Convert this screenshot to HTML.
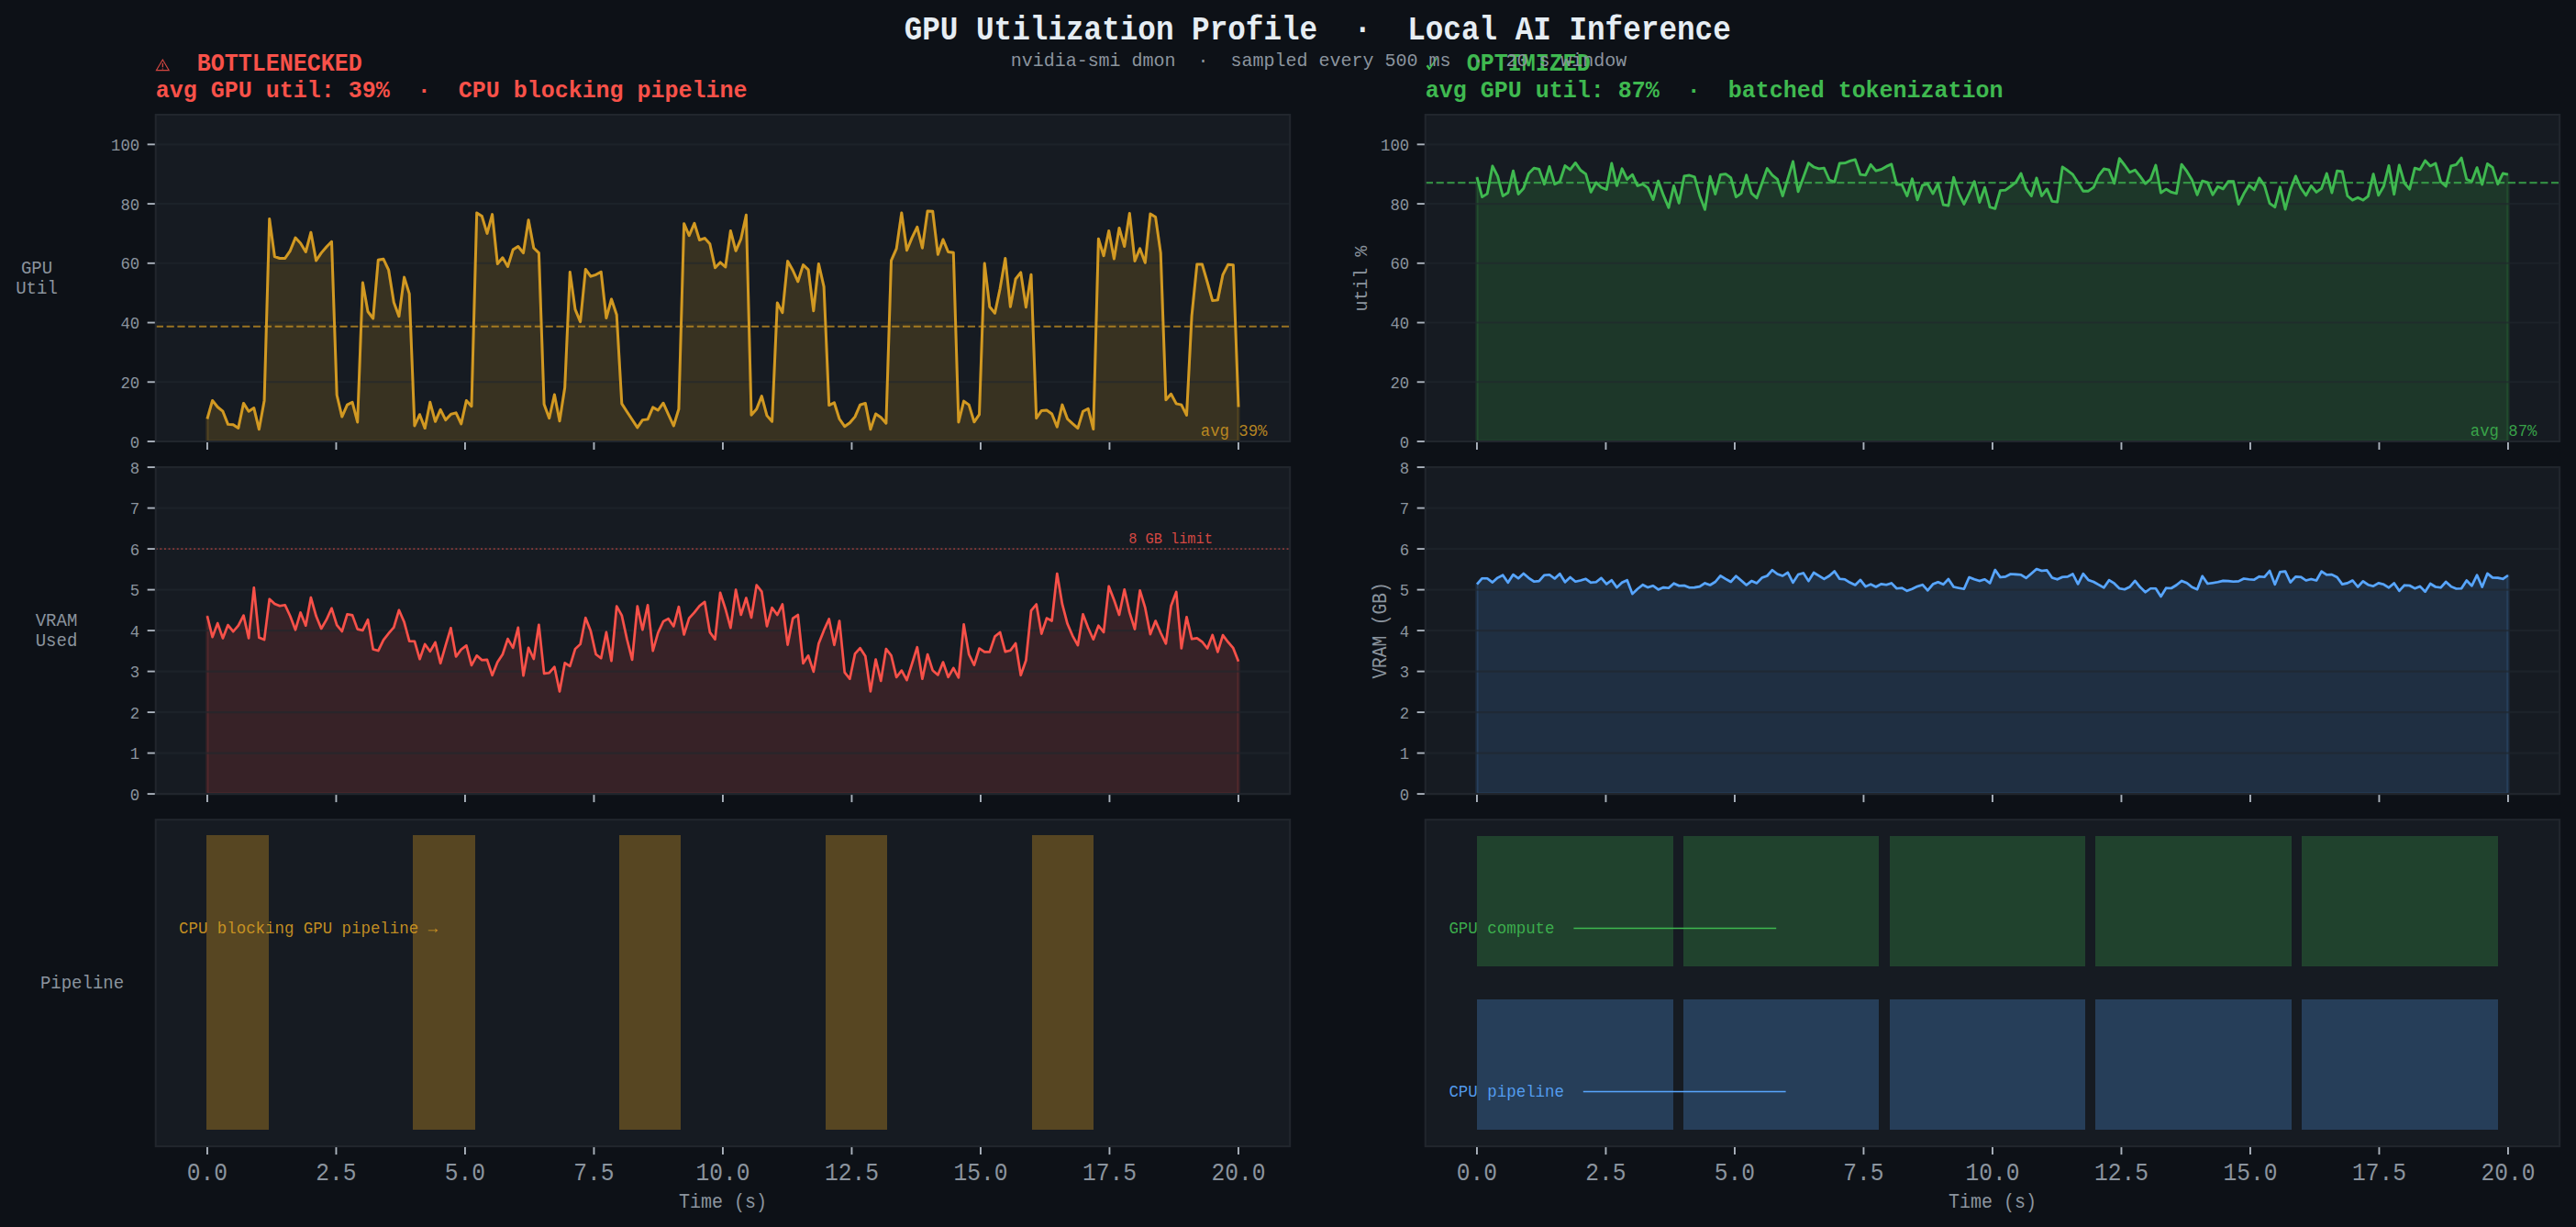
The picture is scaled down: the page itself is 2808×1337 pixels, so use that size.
<!DOCTYPE html>
<html><head><meta charset="utf-8"><title>GPU Utilization Profile</title>
<style>html,body{margin:0;padding:0;background:#0d1117;}body{width:2808px;height:1337px;overflow:hidden;font-family:"Liberation Mono",monospace;}svg{display:block}svg text{white-space:pre}</style>
</head><body>
<svg width="2808" height="1337" viewBox="0 0 2808 1337" font-family="Liberation Mono, monospace">
<rect width="2808" height="1337" fill="#0d1117"/>
<rect x="169.75" y="125.00" width="1236.40" height="356.00" fill="#161b22"/>
<clipPath id="c1"><rect x="169.75" y="0" width="1236.40" height="481.00"/></clipPath>
<polygon points="225.9,481.0 225.9,456.5 231.6,436.4 237.2,443.5 242.9,448.2 248.5,462.4 254.2,462.8 259.8,466.4 265.5,439.4 271.1,448.2 276.8,444.6 282.4,467.8 288.1,436.4 293.7,238.5 299.4,279.7 305.0,281.5 310.7,281.5 316.3,273.3 322.0,259.1 327.6,265.0 333.3,274.5 338.9,253.2 344.6,283.9 350.2,275.6 355.9,269.0 361.5,263.3 367.2,430.5 372.8,454.1 378.5,441.1 384.1,438.3 389.7,460.0 395.4,308.0 401.0,339.5 406.7,347.0 412.3,283.2 418.0,282.3 423.6,294.1 429.3,329.5 434.9,344.7 440.6,302.1 446.2,320.1 451.9,464.0 457.5,451.7 463.2,466.6 468.8,438.3 474.5,459.3 480.1,446.3 485.8,457.6 491.4,451.4 497.1,449.8 502.7,461.9 508.4,436.4 514.0,442.7 519.7,231.9 525.3,235.5 531.0,254.4 536.6,233.6 542.3,287.5 547.9,280.8 553.5,290.5 559.2,272.1 564.8,268.5 570.5,275.6 576.1,239.7 581.8,270.2 587.4,275.6 593.1,440.4 598.7,455.7 604.4,430.0 610.0,458.8 615.7,422.2 621.3,296.4 627.0,337.1 632.6,350.6 638.3,293.4 643.9,301.2 649.6,299.3 655.2,296.2 660.9,346.5 666.5,326.0 672.2,343.0 677.8,439.9 683.5,448.7 689.1,457.2 694.8,465.9 700.4,457.6 706.1,456.9 711.7,443.9 717.3,447.0 723.0,439.2 728.6,451.7 734.3,464.0 739.9,445.8 745.6,243.7 751.2,256.7 756.9,243.3 762.5,261.5 768.2,259.6 773.8,265.7 779.5,291.7 785.1,285.9 790.8,291.0 796.4,251.5 802.1,273.3 807.7,260.3 813.4,234.3 819.0,452.2 824.7,445.8 830.3,431.6 836.0,452.9 841.6,459.3 847.3,330.0 852.9,340.6 858.6,284.6 864.2,294.5 869.8,306.8 875.5,288.6 881.1,293.8 886.8,338.7 892.4,287.5 898.1,312.3 903.7,441.6 909.4,438.7 915.0,456.5 920.7,464.7 926.3,460.7 932.0,454.1 937.6,441.1 943.3,439.4 948.9,467.8 954.6,451.0 960.2,454.8 965.9,461.2 971.5,283.9 977.2,270.9 982.8,231.9 988.5,272.8 994.1,259.1 999.8,247.3 1005.4,270.2 1011.1,230.0 1016.7,230.3 1022.4,277.3 1028.0,261.0 1033.6,274.5 1039.3,275.2 1044.9,460.0 1050.6,437.1 1056.2,441.1 1061.9,459.8 1067.5,451.7 1073.2,287.0 1078.8,334.3 1084.5,341.3 1090.1,314.6 1095.8,281.5 1101.4,334.3 1107.1,304.0 1112.7,296.9 1118.4,334.7 1124.0,299.3 1129.7,455.7 1135.3,447.5 1141.0,447.0 1146.6,451.0 1152.3,465.2 1157.9,441.1 1163.6,456.5 1169.2,461.7 1174.9,466.6 1180.5,448.2 1186.2,445.3 1191.8,467.6 1197.4,260.3 1203.1,278.7 1208.7,251.5 1214.4,282.0 1220.0,248.5 1225.7,268.5 1231.3,232.4 1237.0,284.4 1242.6,270.9 1248.3,286.3 1253.9,233.1 1259.6,236.6 1265.2,275.6 1270.9,435.7 1276.5,429.3 1282.2,439.9 1287.8,441.1 1293.5,452.4 1299.1,344.2 1304.8,287.9 1310.4,287.9 1316.1,307.5 1321.7,327.6 1327.4,326.9 1333.0,299.3 1338.7,288.2 1344.3,288.6 1350.0,443.5 1350.0,481.0" fill="#d29922" fill-opacity="0.18" stroke="#d29922" stroke-opacity="0.18" stroke-width="3.2" stroke-linejoin="round" clip-path="url(#c1)"/>
<line x1="169.75" x2="1406.15" y1="481.00" y2="481.00" stroke="#21262d" stroke-opacity="0.62" stroke-width="2.1"/>
<line x1="169.75" x2="1406.15" y1="416.27" y2="416.27" stroke="#21262d" stroke-opacity="0.62" stroke-width="2.1"/>
<line x1="169.75" x2="1406.15" y1="351.55" y2="351.55" stroke="#21262d" stroke-opacity="0.62" stroke-width="2.1"/>
<line x1="169.75" x2="1406.15" y1="286.82" y2="286.82" stroke="#21262d" stroke-opacity="0.62" stroke-width="2.1"/>
<line x1="169.75" x2="1406.15" y1="222.09" y2="222.09" stroke="#21262d" stroke-opacity="0.62" stroke-width="2.1"/>
<line x1="169.75" x2="1406.15" y1="157.36" y2="157.36" stroke="#21262d" stroke-opacity="0.62" stroke-width="2.1"/>
<polyline points="225.9,456.5 231.6,436.4 237.2,443.5 242.9,448.2 248.5,462.4 254.2,462.8 259.8,466.4 265.5,439.4 271.1,448.2 276.8,444.6 282.4,467.8 288.1,436.4 293.7,238.5 299.4,279.7 305.0,281.5 310.7,281.5 316.3,273.3 322.0,259.1 327.6,265.0 333.3,274.5 338.9,253.2 344.6,283.9 350.2,275.6 355.9,269.0 361.5,263.3 367.2,430.5 372.8,454.1 378.5,441.1 384.1,438.3 389.7,460.0 395.4,308.0 401.0,339.5 406.7,347.0 412.3,283.2 418.0,282.3 423.6,294.1 429.3,329.5 434.9,344.7 440.6,302.1 446.2,320.1 451.9,464.0 457.5,451.7 463.2,466.6 468.8,438.3 474.5,459.3 480.1,446.3 485.8,457.6 491.4,451.4 497.1,449.8 502.7,461.9 508.4,436.4 514.0,442.7 519.7,231.9 525.3,235.5 531.0,254.4 536.6,233.6 542.3,287.5 547.9,280.8 553.5,290.5 559.2,272.1 564.8,268.5 570.5,275.6 576.1,239.7 581.8,270.2 587.4,275.6 593.1,440.4 598.7,455.7 604.4,430.0 610.0,458.8 615.7,422.2 621.3,296.4 627.0,337.1 632.6,350.6 638.3,293.4 643.9,301.2 649.6,299.3 655.2,296.2 660.9,346.5 666.5,326.0 672.2,343.0 677.8,439.9 683.5,448.7 689.1,457.2 694.8,465.9 700.4,457.6 706.1,456.9 711.7,443.9 717.3,447.0 723.0,439.2 728.6,451.7 734.3,464.0 739.9,445.8 745.6,243.7 751.2,256.7 756.9,243.3 762.5,261.5 768.2,259.6 773.8,265.7 779.5,291.7 785.1,285.9 790.8,291.0 796.4,251.5 802.1,273.3 807.7,260.3 813.4,234.3 819.0,452.2 824.7,445.8 830.3,431.6 836.0,452.9 841.6,459.3 847.3,330.0 852.9,340.6 858.6,284.6 864.2,294.5 869.8,306.8 875.5,288.6 881.1,293.8 886.8,338.7 892.4,287.5 898.1,312.3 903.7,441.6 909.4,438.7 915.0,456.5 920.7,464.7 926.3,460.7 932.0,454.1 937.6,441.1 943.3,439.4 948.9,467.8 954.6,451.0 960.2,454.8 965.9,461.2 971.5,283.9 977.2,270.9 982.8,231.9 988.5,272.8 994.1,259.1 999.8,247.3 1005.4,270.2 1011.1,230.0 1016.7,230.3 1022.4,277.3 1028.0,261.0 1033.6,274.5 1039.3,275.2 1044.9,460.0 1050.6,437.1 1056.2,441.1 1061.9,459.8 1067.5,451.7 1073.2,287.0 1078.8,334.3 1084.5,341.3 1090.1,314.6 1095.8,281.5 1101.4,334.3 1107.1,304.0 1112.7,296.9 1118.4,334.7 1124.0,299.3 1129.7,455.7 1135.3,447.5 1141.0,447.0 1146.6,451.0 1152.3,465.2 1157.9,441.1 1163.6,456.5 1169.2,461.7 1174.9,466.6 1180.5,448.2 1186.2,445.3 1191.8,467.6 1197.4,260.3 1203.1,278.7 1208.7,251.5 1214.4,282.0 1220.0,248.5 1225.7,268.5 1231.3,232.4 1237.0,284.4 1242.6,270.9 1248.3,286.3 1253.9,233.1 1259.6,236.6 1265.2,275.6 1270.9,435.7 1276.5,429.3 1282.2,439.9 1287.8,441.1 1293.5,452.4 1299.1,344.2 1304.8,287.9 1310.4,287.9 1316.1,307.5 1321.7,327.6 1327.4,326.9 1333.0,299.3 1338.7,288.2 1344.3,288.6 1350.0,443.5" fill="none" stroke="#d29922" stroke-width="2.95" stroke-linejoin="round" stroke-linecap="butt"/>
<line x1="169.8" x2="1406.2" y1="355.75" y2="355.75" stroke="#d29922" stroke-opacity="0.7" stroke-width="2.2" stroke-dasharray="8.2 3.6"/>
<text transform="translate(1381.42,475.00) scale(1,1.05)" font-size="17.3" fill="#d29922" text-anchor="end" font-weight="normal" xml:space="preserve" fill-opacity="0.85">avg 39%</text>
<rect x="169.75" y="125.00" width="1236.40" height="356.00" fill="none" stroke="#21262d" stroke-width="2.1"/>
<line x1="160.65" x2="168.80" y1="481.00" y2="481.00" stroke="#abb3bd" stroke-width="1.9"/>
<text transform="translate(152.15,487.60) scale(1,1.11)" font-size="17.3" fill="#8b949e" text-anchor="end" font-weight="normal" xml:space="preserve" >0</text>
<line x1="160.65" x2="168.80" y1="416.27" y2="416.27" stroke="#abb3bd" stroke-width="1.9"/>
<text transform="translate(152.15,422.87) scale(1,1.11)" font-size="17.3" fill="#8b949e" text-anchor="end" font-weight="normal" xml:space="preserve" >20</text>
<line x1="160.65" x2="168.80" y1="351.55" y2="351.55" stroke="#abb3bd" stroke-width="1.9"/>
<text transform="translate(152.15,358.15) scale(1,1.11)" font-size="17.3" fill="#8b949e" text-anchor="end" font-weight="normal" xml:space="preserve" >40</text>
<line x1="160.65" x2="168.80" y1="286.82" y2="286.82" stroke="#abb3bd" stroke-width="1.9"/>
<text transform="translate(152.15,293.42) scale(1,1.11)" font-size="17.3" fill="#8b949e" text-anchor="end" font-weight="normal" xml:space="preserve" >60</text>
<line x1="160.65" x2="168.80" y1="222.09" y2="222.09" stroke="#abb3bd" stroke-width="1.9"/>
<text transform="translate(152.15,228.69) scale(1,1.11)" font-size="17.3" fill="#8b949e" text-anchor="end" font-weight="normal" xml:space="preserve" >80</text>
<line x1="160.65" x2="168.80" y1="157.36" y2="157.36" stroke="#abb3bd" stroke-width="1.9"/>
<text transform="translate(152.15,163.96) scale(1,1.11)" font-size="17.3" fill="#8b949e" text-anchor="end" font-weight="normal" xml:space="preserve" >100</text>
<line x1="225.95" x2="225.95" y1="482.00" y2="490.00" stroke="#abb3bd" stroke-width="1.9"/>
<line x1="366.45" x2="366.45" y1="482.00" y2="490.00" stroke="#abb3bd" stroke-width="1.9"/>
<line x1="506.95" x2="506.95" y1="482.00" y2="490.00" stroke="#abb3bd" stroke-width="1.9"/>
<line x1="647.45" x2="647.45" y1="482.00" y2="490.00" stroke="#abb3bd" stroke-width="1.9"/>
<line x1="787.95" x2="787.95" y1="482.00" y2="490.00" stroke="#abb3bd" stroke-width="1.9"/>
<line x1="928.45" x2="928.45" y1="482.00" y2="490.00" stroke="#abb3bd" stroke-width="1.9"/>
<line x1="1068.95" x2="1068.95" y1="482.00" y2="490.00" stroke="#abb3bd" stroke-width="1.9"/>
<line x1="1209.45" x2="1209.45" y1="482.00" y2="490.00" stroke="#abb3bd" stroke-width="1.9"/>
<line x1="1349.95" x2="1349.95" y1="482.00" y2="490.00" stroke="#abb3bd" stroke-width="1.9"/>
<rect x="169.75" y="509.10" width="1236.40" height="356.00" fill="#161b22"/>
<clipPath id="c2"><rect x="169.75" y="0" width="1236.40" height="865.10"/></clipPath>
<polygon points="225.9,865.1 225.9,671.3 231.6,694.1 237.2,679.1 242.9,695.4 248.5,681.1 254.2,688.2 259.8,681.7 265.5,670.6 271.1,695.4 276.8,640.3 282.4,694.8 288.1,697.1 293.7,652.8 299.4,658.0 305.0,660.2 310.7,659.3 316.3,671.3 322.0,686.3 327.6,667.4 333.3,681.7 338.9,651.1 344.6,671.3 350.2,685.0 355.9,675.2 361.5,662.8 367.2,681.1 372.8,688.0 378.5,669.3 384.1,670.4 389.7,685.6 395.4,686.9 401.0,675.2 406.7,707.5 412.3,709.1 418.0,697.4 423.6,690.2 429.3,683.7 434.9,664.8 440.6,677.8 446.2,698.7 451.9,698.7 457.5,718.2 463.2,701.9 468.8,709.8 474.5,700.0 480.1,722.8 485.8,703.2 491.4,684.3 497.1,715.5 502.7,707.7 508.4,703.4 514.0,725.0 519.7,714.3 525.3,719.3 531.0,718.9 536.6,735.8 542.3,721.5 547.9,713.0 553.5,696.1 559.2,705.8 564.8,683.9 570.5,736.2 576.1,705.8 581.8,718.0 587.4,680.8 593.1,733.9 598.7,733.2 604.4,726.7 610.0,753.4 615.7,722.4 621.3,725.8 627.0,707.1 632.6,701.9 638.3,673.2 643.9,687.6 649.6,713.0 655.2,717.2 660.9,688.9 666.5,720.2 672.2,660.6 677.8,670.6 683.5,696.7 689.1,718.9 694.8,660.6 700.4,686.3 706.1,659.3 711.7,709.1 717.3,689.5 723.0,677.2 728.6,674.2 734.3,682.4 739.9,661.2 745.6,691.5 751.2,673.6 756.9,667.4 762.5,660.2 768.2,655.9 773.8,688.9 779.5,696.7 785.1,645.9 790.8,663.5 796.4,684.1 802.1,642.6 807.7,670.0 813.4,651.5 819.0,673.0 824.7,637.6 830.3,644.6 836.0,682.4 841.6,662.2 847.3,670.0 852.9,658.5 858.6,702.6 864.2,673.9 869.8,670.0 875.5,722.8 881.1,714.3 886.8,731.9 892.4,701.3 898.1,686.9 903.7,674.5 909.4,702.8 915.0,676.5 920.7,732.6 926.3,739.7 932.0,712.4 937.6,706.2 943.3,715.0 948.9,753.4 954.6,718.5 960.2,742.0 965.9,707.1 971.5,714.3 977.2,738.0 982.8,730.6 988.5,741.0 994.1,723.4 999.8,705.2 1005.4,739.7 1011.1,713.0 1016.7,730.6 1022.4,735.4 1028.0,721.5 1033.6,737.8 1039.3,728.0 1044.9,738.4 1050.6,680.4 1056.2,713.0 1061.9,724.7 1067.5,706.5 1073.2,710.4 1078.8,710.4 1084.5,693.5 1090.1,688.9 1095.8,710.1 1101.4,708.8 1107.1,701.0 1112.7,735.8 1118.4,719.5 1124.0,665.4 1129.7,658.5 1135.3,690.6 1141.0,673.6 1146.6,676.5 1152.3,625.0 1157.9,658.2 1163.6,679.8 1169.2,692.8 1174.9,703.2 1180.5,669.3 1186.2,684.3 1191.8,696.7 1197.4,681.7 1203.1,688.9 1208.7,638.9 1214.4,653.7 1220.0,670.0 1225.7,642.3 1231.3,667.4 1237.0,685.6 1242.6,643.3 1248.3,662.2 1253.9,691.1 1259.6,676.5 1265.2,689.5 1270.9,701.3 1276.5,660.2 1282.2,644.9 1287.8,706.5 1293.5,672.3 1299.1,696.3 1304.8,695.4 1310.4,699.3 1316.1,706.5 1321.7,691.9 1327.4,710.4 1333.0,692.1 1338.7,699.7 1344.3,706.2 1350.0,720.8 1350.0,865.1" fill="#f85149" fill-opacity="0.15" stroke="#f85149" stroke-opacity="0.15" stroke-width="3.2" stroke-linejoin="round" clip-path="url(#c2)"/>
<line x1="169.75" x2="1406.15" y1="865.10" y2="865.10" stroke="#21262d" stroke-opacity="0.62" stroke-width="2.1"/>
<line x1="169.75" x2="1406.15" y1="820.60" y2="820.60" stroke="#21262d" stroke-opacity="0.62" stroke-width="2.1"/>
<line x1="169.75" x2="1406.15" y1="776.10" y2="776.10" stroke="#21262d" stroke-opacity="0.62" stroke-width="2.1"/>
<line x1="169.75" x2="1406.15" y1="731.60" y2="731.60" stroke="#21262d" stroke-opacity="0.62" stroke-width="2.1"/>
<line x1="169.75" x2="1406.15" y1="687.10" y2="687.10" stroke="#21262d" stroke-opacity="0.62" stroke-width="2.1"/>
<line x1="169.75" x2="1406.15" y1="642.60" y2="642.60" stroke="#21262d" stroke-opacity="0.62" stroke-width="2.1"/>
<line x1="169.75" x2="1406.15" y1="598.10" y2="598.10" stroke="#21262d" stroke-opacity="0.62" stroke-width="2.1"/>
<line x1="169.75" x2="1406.15" y1="553.60" y2="553.60" stroke="#21262d" stroke-opacity="0.62" stroke-width="2.1"/>
<line x1="169.75" x2="1406.15" y1="509.10" y2="509.10" stroke="#21262d" stroke-opacity="0.62" stroke-width="2.1"/>
<polyline points="225.9,671.3 231.6,694.1 237.2,679.1 242.9,695.4 248.5,681.1 254.2,688.2 259.8,681.7 265.5,670.6 271.1,695.4 276.8,640.3 282.4,694.8 288.1,697.1 293.7,652.8 299.4,658.0 305.0,660.2 310.7,659.3 316.3,671.3 322.0,686.3 327.6,667.4 333.3,681.7 338.9,651.1 344.6,671.3 350.2,685.0 355.9,675.2 361.5,662.8 367.2,681.1 372.8,688.0 378.5,669.3 384.1,670.4 389.7,685.6 395.4,686.9 401.0,675.2 406.7,707.5 412.3,709.1 418.0,697.4 423.6,690.2 429.3,683.7 434.9,664.8 440.6,677.8 446.2,698.7 451.9,698.7 457.5,718.2 463.2,701.9 468.8,709.8 474.5,700.0 480.1,722.8 485.8,703.2 491.4,684.3 497.1,715.5 502.7,707.7 508.4,703.4 514.0,725.0 519.7,714.3 525.3,719.3 531.0,718.9 536.6,735.8 542.3,721.5 547.9,713.0 553.5,696.1 559.2,705.8 564.8,683.9 570.5,736.2 576.1,705.8 581.8,718.0 587.4,680.8 593.1,733.9 598.7,733.2 604.4,726.7 610.0,753.4 615.7,722.4 621.3,725.8 627.0,707.1 632.6,701.9 638.3,673.2 643.9,687.6 649.6,713.0 655.2,717.2 660.9,688.9 666.5,720.2 672.2,660.6 677.8,670.6 683.5,696.7 689.1,718.9 694.8,660.6 700.4,686.3 706.1,659.3 711.7,709.1 717.3,689.5 723.0,677.2 728.6,674.2 734.3,682.4 739.9,661.2 745.6,691.5 751.2,673.6 756.9,667.4 762.5,660.2 768.2,655.9 773.8,688.9 779.5,696.7 785.1,645.9 790.8,663.5 796.4,684.1 802.1,642.6 807.7,670.0 813.4,651.5 819.0,673.0 824.7,637.6 830.3,644.6 836.0,682.4 841.6,662.2 847.3,670.0 852.9,658.5 858.6,702.6 864.2,673.9 869.8,670.0 875.5,722.8 881.1,714.3 886.8,731.9 892.4,701.3 898.1,686.9 903.7,674.5 909.4,702.8 915.0,676.5 920.7,732.6 926.3,739.7 932.0,712.4 937.6,706.2 943.3,715.0 948.9,753.4 954.6,718.5 960.2,742.0 965.9,707.1 971.5,714.3 977.2,738.0 982.8,730.6 988.5,741.0 994.1,723.4 999.8,705.2 1005.4,739.7 1011.1,713.0 1016.7,730.6 1022.4,735.4 1028.0,721.5 1033.6,737.8 1039.3,728.0 1044.9,738.4 1050.6,680.4 1056.2,713.0 1061.9,724.7 1067.5,706.5 1073.2,710.4 1078.8,710.4 1084.5,693.5 1090.1,688.9 1095.8,710.1 1101.4,708.8 1107.1,701.0 1112.7,735.8 1118.4,719.5 1124.0,665.4 1129.7,658.5 1135.3,690.6 1141.0,673.6 1146.6,676.5 1152.3,625.0 1157.9,658.2 1163.6,679.8 1169.2,692.8 1174.9,703.2 1180.5,669.3 1186.2,684.3 1191.8,696.7 1197.4,681.7 1203.1,688.9 1208.7,638.9 1214.4,653.7 1220.0,670.0 1225.7,642.3 1231.3,667.4 1237.0,685.6 1242.6,643.3 1248.3,662.2 1253.9,691.1 1259.6,676.5 1265.2,689.5 1270.9,701.3 1276.5,660.2 1282.2,644.9 1287.8,706.5 1293.5,672.3 1299.1,696.3 1304.8,695.4 1310.4,699.3 1316.1,706.5 1321.7,691.9 1327.4,710.4 1333.0,692.1 1338.7,699.7 1344.3,706.2 1350.0,720.8" fill="none" stroke="#f85149" stroke-width="2.65" stroke-linejoin="round" stroke-linecap="butt"/>
<line x1="169.8" x2="1406.2" y1="598.10" y2="598.10" stroke="#f85149" stroke-opacity="0.5" stroke-width="1.9" stroke-dasharray="1.9 2.7"/>
<text transform="translate(1321.85,591.50) scale(1,1.06)" font-size="15.3" fill="#f85149" text-anchor="end" font-weight="normal" xml:space="preserve" fill-opacity="0.85">8 GB limit</text>
<rect x="169.75" y="509.10" width="1236.40" height="356.00" fill="none" stroke="#21262d" stroke-width="2.1"/>
<line x1="160.65" x2="168.80" y1="865.10" y2="865.10" stroke="#abb3bd" stroke-width="1.9"/>
<text transform="translate(152.15,871.70) scale(1,1.11)" font-size="17.3" fill="#8b949e" text-anchor="end" font-weight="normal" xml:space="preserve" >0</text>
<line x1="160.65" x2="168.80" y1="820.60" y2="820.60" stroke="#abb3bd" stroke-width="1.9"/>
<text transform="translate(152.15,827.20) scale(1,1.11)" font-size="17.3" fill="#8b949e" text-anchor="end" font-weight="normal" xml:space="preserve" >1</text>
<line x1="160.65" x2="168.80" y1="776.10" y2="776.10" stroke="#abb3bd" stroke-width="1.9"/>
<text transform="translate(152.15,782.70) scale(1,1.11)" font-size="17.3" fill="#8b949e" text-anchor="end" font-weight="normal" xml:space="preserve" >2</text>
<line x1="160.65" x2="168.80" y1="731.60" y2="731.60" stroke="#abb3bd" stroke-width="1.9"/>
<text transform="translate(152.15,738.20) scale(1,1.11)" font-size="17.3" fill="#8b949e" text-anchor="end" font-weight="normal" xml:space="preserve" >3</text>
<line x1="160.65" x2="168.80" y1="687.10" y2="687.10" stroke="#abb3bd" stroke-width="1.9"/>
<text transform="translate(152.15,693.70) scale(1,1.11)" font-size="17.3" fill="#8b949e" text-anchor="end" font-weight="normal" xml:space="preserve" >4</text>
<line x1="160.65" x2="168.80" y1="642.60" y2="642.60" stroke="#abb3bd" stroke-width="1.9"/>
<text transform="translate(152.15,649.20) scale(1,1.11)" font-size="17.3" fill="#8b949e" text-anchor="end" font-weight="normal" xml:space="preserve" >5</text>
<line x1="160.65" x2="168.80" y1="598.10" y2="598.10" stroke="#abb3bd" stroke-width="1.9"/>
<text transform="translate(152.15,604.70) scale(1,1.11)" font-size="17.3" fill="#8b949e" text-anchor="end" font-weight="normal" xml:space="preserve" >6</text>
<line x1="160.65" x2="168.80" y1="553.60" y2="553.60" stroke="#abb3bd" stroke-width="1.9"/>
<text transform="translate(152.15,560.20) scale(1,1.11)" font-size="17.3" fill="#8b949e" text-anchor="end" font-weight="normal" xml:space="preserve" >7</text>
<line x1="160.65" x2="168.80" y1="509.10" y2="509.10" stroke="#abb3bd" stroke-width="1.9"/>
<text transform="translate(152.15,515.70) scale(1,1.11)" font-size="17.3" fill="#8b949e" text-anchor="end" font-weight="normal" xml:space="preserve" >8</text>
<line x1="225.95" x2="225.95" y1="866.10" y2="874.10" stroke="#abb3bd" stroke-width="1.9"/>
<line x1="366.45" x2="366.45" y1="866.10" y2="874.10" stroke="#abb3bd" stroke-width="1.9"/>
<line x1="506.95" x2="506.95" y1="866.10" y2="874.10" stroke="#abb3bd" stroke-width="1.9"/>
<line x1="647.45" x2="647.45" y1="866.10" y2="874.10" stroke="#abb3bd" stroke-width="1.9"/>
<line x1="787.95" x2="787.95" y1="866.10" y2="874.10" stroke="#abb3bd" stroke-width="1.9"/>
<line x1="928.45" x2="928.45" y1="866.10" y2="874.10" stroke="#abb3bd" stroke-width="1.9"/>
<line x1="1068.95" x2="1068.95" y1="866.10" y2="874.10" stroke="#abb3bd" stroke-width="1.9"/>
<line x1="1209.45" x2="1209.45" y1="866.10" y2="874.10" stroke="#abb3bd" stroke-width="1.9"/>
<line x1="1349.95" x2="1349.95" y1="866.10" y2="874.10" stroke="#abb3bd" stroke-width="1.9"/>
<rect x="169.75" y="893.20" width="1236.40" height="355.90" fill="#161b22"/>
<rect x="225" y="910" width="68" height="321" fill="#d29922" fill-opacity="0.35"/>
<rect x="450" y="910" width="68" height="321" fill="#d29922" fill-opacity="0.35"/>
<rect x="675" y="910" width="67" height="321" fill="#d29922" fill-opacity="0.35"/>
<rect x="900" y="910" width="67" height="321" fill="#d29922" fill-opacity="0.35"/>
<rect x="1125" y="910" width="67" height="321" fill="#d29922" fill-opacity="0.35"/>
<text transform="translate(195.08,1016.90) scale(1,1.04)" font-size="17.4" fill="#d29922" text-anchor="start" font-weight="normal" xml:space="preserve" fill-opacity="0.92">CPU blocking GPU pipeline →</text>
<rect x="169.75" y="893.20" width="1236.40" height="355.90" fill="none" stroke="#21262d" stroke-width="2.1"/>
<line x1="225.95" x2="225.95" y1="1250.10" y2="1258.10" stroke="#abb3bd" stroke-width="1.9"/>
<text transform="translate(225.95,1286.00) scale(1,1.1)" font-size="24.6" fill="#8b949e" text-anchor="middle" font-weight="normal" xml:space="preserve" >0.0</text>
<line x1="366.45" x2="366.45" y1="1250.10" y2="1258.10" stroke="#abb3bd" stroke-width="1.9"/>
<text transform="translate(366.45,1286.00) scale(1,1.1)" font-size="24.6" fill="#8b949e" text-anchor="middle" font-weight="normal" xml:space="preserve" >2.5</text>
<line x1="506.95" x2="506.95" y1="1250.10" y2="1258.10" stroke="#abb3bd" stroke-width="1.9"/>
<text transform="translate(506.95,1286.00) scale(1,1.1)" font-size="24.6" fill="#8b949e" text-anchor="middle" font-weight="normal" xml:space="preserve" >5.0</text>
<line x1="647.45" x2="647.45" y1="1250.10" y2="1258.10" stroke="#abb3bd" stroke-width="1.9"/>
<text transform="translate(647.45,1286.00) scale(1,1.1)" font-size="24.6" fill="#8b949e" text-anchor="middle" font-weight="normal" xml:space="preserve" >7.5</text>
<line x1="787.95" x2="787.95" y1="1250.10" y2="1258.10" stroke="#abb3bd" stroke-width="1.9"/>
<text transform="translate(787.95,1286.00) scale(1,1.1)" font-size="24.6" fill="#8b949e" text-anchor="middle" font-weight="normal" xml:space="preserve" >10.0</text>
<line x1="928.45" x2="928.45" y1="1250.10" y2="1258.10" stroke="#abb3bd" stroke-width="1.9"/>
<text transform="translate(928.45,1286.00) scale(1,1.1)" font-size="24.6" fill="#8b949e" text-anchor="middle" font-weight="normal" xml:space="preserve" >12.5</text>
<line x1="1068.95" x2="1068.95" y1="1250.10" y2="1258.10" stroke="#abb3bd" stroke-width="1.9"/>
<text transform="translate(1068.95,1286.00) scale(1,1.1)" font-size="24.6" fill="#8b949e" text-anchor="middle" font-weight="normal" xml:space="preserve" >15.0</text>
<line x1="1209.45" x2="1209.45" y1="1250.10" y2="1258.10" stroke="#abb3bd" stroke-width="1.9"/>
<text transform="translate(1209.45,1286.00) scale(1,1.1)" font-size="24.6" fill="#8b949e" text-anchor="middle" font-weight="normal" xml:space="preserve" >17.5</text>
<line x1="1349.95" x2="1349.95" y1="1250.10" y2="1258.10" stroke="#abb3bd" stroke-width="1.9"/>
<text transform="translate(1349.95,1286.00) scale(1,1.1)" font-size="24.6" fill="#8b949e" text-anchor="middle" font-weight="normal" xml:space="preserve" >20.0</text>
<text transform="translate(787.95,1316.30) scale(1,1.06)" font-size="20.0" fill="#8b949e" text-anchor="middle" font-weight="normal" xml:space="preserve" >Time (s)</text>
<rect x="1553.75" y="125.00" width="1236.40" height="356.00" fill="#161b22"/>
<clipPath id="c3"><rect x="1553.75" y="0" width="1236.40" height="481.00"/></clipPath>
<polygon points="1610.0,481.0 1610.0,193.1 1615.6,214.6 1621.2,211.1 1626.9,180.9 1632.5,191.9 1638.2,213.5 1643.8,210.0 1649.5,186.1 1655.1,211.5 1660.8,205.3 1666.4,189.0 1672.1,183.2 1677.7,184.4 1683.4,200.7 1689.0,181.4 1694.7,200.7 1700.3,197.7 1706.0,180.5 1711.6,184.9 1717.3,177.4 1722.9,185.5 1728.6,189.6 1734.2,209.4 1739.9,198.9 1745.5,204.2 1751.2,206.5 1756.8,178.0 1762.5,202.4 1768.1,183.8 1773.7,195.4 1779.4,190.2 1785.0,202.4 1790.7,200.7 1796.3,204.7 1802.0,217.5 1807.6,197.2 1813.3,212.9 1818.9,226.3 1824.6,202.4 1830.2,221.3 1835.9,191.9 1841.5,191.0 1847.2,192.9 1852.8,213.5 1858.5,228.3 1864.1,192.2 1869.8,211.5 1875.4,190.4 1881.1,189.6 1886.7,193.7 1892.4,214.6 1898.0,210.6 1903.7,190.8 1909.3,210.6 1915.0,215.8 1920.6,199.7 1926.3,183.5 1931.9,190.8 1937.5,195.4 1943.2,213.5 1948.8,194.8 1954.5,175.9 1960.1,208.8 1965.8,193.3 1971.4,177.7 1977.1,182.0 1982.7,183.8 1988.4,183.2 1994.0,196.0 1999.7,198.3 2005.3,178.0 2011.0,177.7 2016.6,175.4 2022.3,173.9 2027.9,190.2 2033.6,190.8 2039.2,179.3 2044.9,186.1 2050.5,184.7 2056.2,181.4 2061.8,178.9 2067.5,201.2 2073.1,201.0 2078.8,213.5 2084.4,194.8 2090.1,217.8 2095.7,201.8 2101.3,200.3 2107.0,211.1 2112.6,200.1 2118.3,223.1 2123.9,224.0 2129.6,193.3 2135.2,210.6 2140.9,222.4 2146.5,210.6 2152.2,197.7 2157.8,220.5 2163.5,204.2 2169.1,225.7 2174.8,227.3 2180.4,207.6 2186.1,207.1 2191.7,203.0 2197.4,198.7 2203.0,189.0 2208.7,205.9 2214.3,213.5 2220.0,194.0 2225.6,213.5 2231.3,205.9 2236.9,219.3 2242.6,220.1 2248.2,182.0 2253.8,185.8 2259.5,190.2 2265.1,198.9 2270.8,208.2 2276.4,208.2 2282.1,204.2 2287.7,191.3 2293.4,184.0 2299.0,185.2 2304.7,199.8 2310.3,172.7 2316.0,180.0 2321.6,187.8 2327.3,185.2 2332.9,192.2 2338.6,200.1 2344.2,195.4 2349.9,180.0 2355.5,210.0 2361.2,206.1 2366.8,209.4 2372.5,210.8 2378.1,179.1 2383.8,186.7 2389.4,196.0 2395.1,212.3 2400.7,197.2 2406.4,198.9 2412.0,212.3 2417.6,203.3 2423.3,205.9 2428.9,197.7 2434.6,197.7 2440.2,222.6 2445.9,211.1 2451.5,201.8 2457.2,206.8 2462.8,194.0 2468.5,202.4 2474.1,221.6 2479.8,225.7 2485.4,203.8 2491.1,228.0 2496.7,206.5 2502.4,191.9 2508.0,204.7 2513.7,212.9 2519.3,202.4 2525.0,209.4 2530.6,205.3 2536.3,189.0 2541.9,210.0 2547.6,186.1 2553.2,187.0 2558.9,213.5 2564.5,218.1 2570.2,215.2 2575.8,218.1 2581.4,213.8 2587.1,189.6 2592.7,212.9 2598.4,203.0 2604.0,180.5 2609.7,211.7 2615.3,180.0 2621.0,199.5 2626.6,206.2 2632.3,183.2 2637.9,184.9 2643.6,175.0 2649.2,180.9 2654.9,178.0 2660.5,198.0 2666.2,203.0 2671.8,180.9 2677.5,179.3 2683.1,172.1 2688.8,195.4 2694.4,197.7 2700.1,182.6 2705.7,201.0 2711.4,178.5 2717.0,182.4 2722.7,200.7 2728.3,189.0 2733.9,190.2 2733.9,481.0" fill="#3fb950" fill-opacity="0.18" stroke="#3fb950" stroke-opacity="0.18" stroke-width="3.2" stroke-linejoin="round" clip-path="url(#c3)"/>
<line x1="1553.75" x2="2790.15" y1="481.00" y2="481.00" stroke="#21262d" stroke-opacity="0.62" stroke-width="2.1"/>
<line x1="1553.75" x2="2790.15" y1="416.27" y2="416.27" stroke="#21262d" stroke-opacity="0.62" stroke-width="2.1"/>
<line x1="1553.75" x2="2790.15" y1="351.55" y2="351.55" stroke="#21262d" stroke-opacity="0.62" stroke-width="2.1"/>
<line x1="1553.75" x2="2790.15" y1="286.82" y2="286.82" stroke="#21262d" stroke-opacity="0.62" stroke-width="2.1"/>
<line x1="1553.75" x2="2790.15" y1="222.09" y2="222.09" stroke="#21262d" stroke-opacity="0.62" stroke-width="2.1"/>
<line x1="1553.75" x2="2790.15" y1="157.36" y2="157.36" stroke="#21262d" stroke-opacity="0.62" stroke-width="2.1"/>
<polyline points="1610.0,193.1 1615.6,214.6 1621.2,211.1 1626.9,180.9 1632.5,191.9 1638.2,213.5 1643.8,210.0 1649.5,186.1 1655.1,211.5 1660.8,205.3 1666.4,189.0 1672.1,183.2 1677.7,184.4 1683.4,200.7 1689.0,181.4 1694.7,200.7 1700.3,197.7 1706.0,180.5 1711.6,184.9 1717.3,177.4 1722.9,185.5 1728.6,189.6 1734.2,209.4 1739.9,198.9 1745.5,204.2 1751.2,206.5 1756.8,178.0 1762.5,202.4 1768.1,183.8 1773.7,195.4 1779.4,190.2 1785.0,202.4 1790.7,200.7 1796.3,204.7 1802.0,217.5 1807.6,197.2 1813.3,212.9 1818.9,226.3 1824.6,202.4 1830.2,221.3 1835.9,191.9 1841.5,191.0 1847.2,192.9 1852.8,213.5 1858.5,228.3 1864.1,192.2 1869.8,211.5 1875.4,190.4 1881.1,189.6 1886.7,193.7 1892.4,214.6 1898.0,210.6 1903.7,190.8 1909.3,210.6 1915.0,215.8 1920.6,199.7 1926.3,183.5 1931.9,190.8 1937.5,195.4 1943.2,213.5 1948.8,194.8 1954.5,175.9 1960.1,208.8 1965.8,193.3 1971.4,177.7 1977.1,182.0 1982.7,183.8 1988.4,183.2 1994.0,196.0 1999.7,198.3 2005.3,178.0 2011.0,177.7 2016.6,175.4 2022.3,173.9 2027.9,190.2 2033.6,190.8 2039.2,179.3 2044.9,186.1 2050.5,184.7 2056.2,181.4 2061.8,178.9 2067.5,201.2 2073.1,201.0 2078.8,213.5 2084.4,194.8 2090.1,217.8 2095.7,201.8 2101.3,200.3 2107.0,211.1 2112.6,200.1 2118.3,223.1 2123.9,224.0 2129.6,193.3 2135.2,210.6 2140.9,222.4 2146.5,210.6 2152.2,197.7 2157.8,220.5 2163.5,204.2 2169.1,225.7 2174.8,227.3 2180.4,207.6 2186.1,207.1 2191.7,203.0 2197.4,198.7 2203.0,189.0 2208.7,205.9 2214.3,213.5 2220.0,194.0 2225.6,213.5 2231.3,205.9 2236.9,219.3 2242.6,220.1 2248.2,182.0 2253.8,185.8 2259.5,190.2 2265.1,198.9 2270.8,208.2 2276.4,208.2 2282.1,204.2 2287.7,191.3 2293.4,184.0 2299.0,185.2 2304.7,199.8 2310.3,172.7 2316.0,180.0 2321.6,187.8 2327.3,185.2 2332.9,192.2 2338.6,200.1 2344.2,195.4 2349.9,180.0 2355.5,210.0 2361.2,206.1 2366.8,209.4 2372.5,210.8 2378.1,179.1 2383.8,186.7 2389.4,196.0 2395.1,212.3 2400.7,197.2 2406.4,198.9 2412.0,212.3 2417.6,203.3 2423.3,205.9 2428.9,197.7 2434.6,197.7 2440.2,222.6 2445.9,211.1 2451.5,201.8 2457.2,206.8 2462.8,194.0 2468.5,202.4 2474.1,221.6 2479.8,225.7 2485.4,203.8 2491.1,228.0 2496.7,206.5 2502.4,191.9 2508.0,204.7 2513.7,212.9 2519.3,202.4 2525.0,209.4 2530.6,205.3 2536.3,189.0 2541.9,210.0 2547.6,186.1 2553.2,187.0 2558.9,213.5 2564.5,218.1 2570.2,215.2 2575.8,218.1 2581.4,213.8 2587.1,189.6 2592.7,212.9 2598.4,203.0 2604.0,180.5 2609.7,211.7 2615.3,180.0 2621.0,199.5 2626.6,206.2 2632.3,183.2 2637.9,184.9 2643.6,175.0 2649.2,180.9 2654.9,178.0 2660.5,198.0 2666.2,203.0 2671.8,180.9 2677.5,179.3 2683.1,172.1 2688.8,195.4 2694.4,197.7 2700.1,182.6 2705.7,201.0 2711.4,178.5 2717.0,182.4 2722.7,200.7 2728.3,189.0 2733.9,190.2" fill="none" stroke="#3fb950" stroke-width="2.85" stroke-linejoin="round" stroke-linecap="butt"/>
<line x1="1553.8" x2="2790.2" y1="199.11" y2="199.11" stroke="#3fb950" stroke-opacity="0.7" stroke-width="2.2" stroke-dasharray="8.2 3.6"/>
<text transform="translate(2765.42,475.00) scale(1,1.05)" font-size="17.3" fill="#3fb950" text-anchor="end" font-weight="normal" xml:space="preserve" fill-opacity="0.85">avg 87%</text>
<rect x="1553.75" y="125.00" width="1236.40" height="356.00" fill="none" stroke="#21262d" stroke-width="2.1"/>
<line x1="1544.65" x2="1552.80" y1="481.00" y2="481.00" stroke="#abb3bd" stroke-width="1.9"/>
<text transform="translate(1536.15,487.60) scale(1,1.11)" font-size="17.3" fill="#8b949e" text-anchor="end" font-weight="normal" xml:space="preserve" >0</text>
<line x1="1544.65" x2="1552.80" y1="416.27" y2="416.27" stroke="#abb3bd" stroke-width="1.9"/>
<text transform="translate(1536.15,422.87) scale(1,1.11)" font-size="17.3" fill="#8b949e" text-anchor="end" font-weight="normal" xml:space="preserve" >20</text>
<line x1="1544.65" x2="1552.80" y1="351.55" y2="351.55" stroke="#abb3bd" stroke-width="1.9"/>
<text transform="translate(1536.15,358.15) scale(1,1.11)" font-size="17.3" fill="#8b949e" text-anchor="end" font-weight="normal" xml:space="preserve" >40</text>
<line x1="1544.65" x2="1552.80" y1="286.82" y2="286.82" stroke="#abb3bd" stroke-width="1.9"/>
<text transform="translate(1536.15,293.42) scale(1,1.11)" font-size="17.3" fill="#8b949e" text-anchor="end" font-weight="normal" xml:space="preserve" >60</text>
<line x1="1544.65" x2="1552.80" y1="222.09" y2="222.09" stroke="#abb3bd" stroke-width="1.9"/>
<text transform="translate(1536.15,228.69) scale(1,1.11)" font-size="17.3" fill="#8b949e" text-anchor="end" font-weight="normal" xml:space="preserve" >80</text>
<line x1="1544.65" x2="1552.80" y1="157.36" y2="157.36" stroke="#abb3bd" stroke-width="1.9"/>
<text transform="translate(1536.15,163.96) scale(1,1.11)" font-size="17.3" fill="#8b949e" text-anchor="end" font-weight="normal" xml:space="preserve" >100</text>
<line x1="1609.95" x2="1609.95" y1="482.00" y2="490.00" stroke="#abb3bd" stroke-width="1.9"/>
<line x1="1750.45" x2="1750.45" y1="482.00" y2="490.00" stroke="#abb3bd" stroke-width="1.9"/>
<line x1="1890.95" x2="1890.95" y1="482.00" y2="490.00" stroke="#abb3bd" stroke-width="1.9"/>
<line x1="2031.45" x2="2031.45" y1="482.00" y2="490.00" stroke="#abb3bd" stroke-width="1.9"/>
<line x1="2171.95" x2="2171.95" y1="482.00" y2="490.00" stroke="#abb3bd" stroke-width="1.9"/>
<line x1="2312.45" x2="2312.45" y1="482.00" y2="490.00" stroke="#abb3bd" stroke-width="1.9"/>
<line x1="2452.95" x2="2452.95" y1="482.00" y2="490.00" stroke="#abb3bd" stroke-width="1.9"/>
<line x1="2593.45" x2="2593.45" y1="482.00" y2="490.00" stroke="#abb3bd" stroke-width="1.9"/>
<line x1="2733.95" x2="2733.95" y1="482.00" y2="490.00" stroke="#abb3bd" stroke-width="1.9"/>
<rect x="1553.75" y="509.10" width="1236.40" height="356.00" fill="#161b22"/>
<clipPath id="c4"><rect x="1553.75" y="0" width="1236.40" height="865.10"/></clipPath>
<polygon points="1610.0,865.1 1610.0,636.6 1615.6,630.2 1621.2,630.2 1626.9,634.6 1632.5,629.6 1638.2,626.7 1643.8,634.8 1649.5,626.1 1655.1,630.2 1660.8,624.9 1666.4,629.8 1672.1,633.7 1677.7,633.1 1683.4,626.7 1689.0,626.3 1694.7,630.5 1700.3,625.2 1706.0,634.3 1711.6,629.0 1717.3,633.7 1722.9,632.5 1728.6,630.8 1734.2,634.8 1739.9,634.3 1745.5,629.8 1751.2,636.4 1756.8,632.2 1762.5,640.1 1768.1,634.8 1773.7,632.2 1779.4,647.1 1785.0,641.8 1790.7,637.2 1796.3,640.1 1802.0,638.3 1807.6,642.4 1813.3,640.1 1818.9,640.7 1824.6,635.7 1830.2,638.3 1835.9,638.0 1841.5,640.3 1847.2,640.1 1852.8,639.1 1858.5,635.4 1864.1,637.5 1869.8,634.0 1875.4,627.3 1881.1,630.8 1886.7,634.0 1892.4,627.7 1898.0,632.5 1903.7,637.5 1909.3,633.1 1915.0,635.4 1920.6,629.6 1926.3,627.5 1931.9,621.2 1937.5,625.5 1943.2,627.5 1948.8,623.8 1954.5,634.8 1960.1,626.1 1965.8,624.4 1971.4,633.1 1977.1,624.0 1982.7,627.3 1988.4,630.8 1994.0,627.5 1999.7,622.4 2005.3,630.8 2011.0,631.3 2016.6,634.8 2022.3,637.5 2027.9,631.9 2033.6,639.1 2039.2,636.6 2044.9,639.5 2050.5,636.4 2056.2,637.2 2061.8,635.4 2067.5,641.2 2073.1,640.7 2078.8,643.8 2084.4,641.8 2090.1,638.9 2095.7,637.2 2101.3,643.3 2107.0,636.6 2112.6,634.3 2118.3,636.8 2123.9,631.0 2129.6,639.5 2135.2,640.7 2140.9,641.8 2146.5,629.0 2152.2,631.3 2157.8,633.1 2163.5,631.3 2169.1,635.4 2174.8,621.0 2180.4,629.0 2186.1,628.4 2191.7,625.5 2197.4,625.9 2203.0,626.3 2208.7,629.8 2214.3,624.9 2220.0,620.0 2225.6,622.0 2231.3,621.4 2236.9,629.4 2242.6,631.3 2248.2,628.7 2253.8,628.4 2259.5,625.5 2265.1,636.4 2270.8,625.2 2276.4,631.9 2282.1,634.0 2287.7,637.2 2293.4,640.3 2299.0,632.2 2304.7,635.7 2310.3,641.2 2316.0,642.2 2321.6,639.5 2327.3,632.9 2332.9,639.8 2338.6,645.3 2344.2,641.2 2349.9,641.2 2355.5,650.0 2361.2,640.7 2366.8,641.0 2372.5,637.5 2378.1,632.9 2383.8,635.2 2389.4,639.8 2395.1,642.2 2400.7,627.8 2406.4,636.0 2412.0,635.2 2417.6,634.3 2423.3,632.9 2428.9,633.1 2434.6,633.7 2440.2,633.4 2445.9,630.5 2451.5,631.3 2457.2,631.7 2462.8,628.2 2468.5,628.7 2474.1,622.0 2479.8,636.8 2485.4,623.2 2491.1,622.6 2496.7,634.5 2502.4,628.4 2508.0,628.7 2513.7,632.5 2519.3,631.0 2525.0,632.5 2530.6,622.6 2536.3,626.3 2541.9,626.1 2547.6,629.0 2553.2,636.6 2558.9,635.4 2564.5,632.5 2570.2,639.5 2575.8,633.3 2581.4,637.2 2587.1,638.7 2592.7,635.4 2598.4,636.8 2604.0,640.3 2609.7,635.4 2615.3,643.8 2621.0,637.7 2626.6,638.0 2632.3,641.2 2637.9,638.9 2643.6,644.7 2649.2,636.0 2654.9,639.5 2660.5,640.3 2666.2,634.0 2671.8,639.1 2677.5,641.5 2683.1,641.2 2688.8,632.5 2694.4,638.3 2700.1,626.7 2705.7,639.5 2711.4,624.9 2717.0,629.4 2722.7,629.6 2728.3,630.8 2733.9,627.0 2733.9,865.1" fill="#58a6ff" fill-opacity="0.15" stroke="#58a6ff" stroke-opacity="0.15" stroke-width="3.2" stroke-linejoin="round" clip-path="url(#c4)"/>
<line x1="1553.75" x2="2790.15" y1="865.10" y2="865.10" stroke="#21262d" stroke-opacity="0.62" stroke-width="2.1"/>
<line x1="1553.75" x2="2790.15" y1="820.60" y2="820.60" stroke="#21262d" stroke-opacity="0.62" stroke-width="2.1"/>
<line x1="1553.75" x2="2790.15" y1="776.10" y2="776.10" stroke="#21262d" stroke-opacity="0.62" stroke-width="2.1"/>
<line x1="1553.75" x2="2790.15" y1="731.60" y2="731.60" stroke="#21262d" stroke-opacity="0.62" stroke-width="2.1"/>
<line x1="1553.75" x2="2790.15" y1="687.10" y2="687.10" stroke="#21262d" stroke-opacity="0.62" stroke-width="2.1"/>
<line x1="1553.75" x2="2790.15" y1="642.60" y2="642.60" stroke="#21262d" stroke-opacity="0.62" stroke-width="2.1"/>
<line x1="1553.75" x2="2790.15" y1="598.10" y2="598.10" stroke="#21262d" stroke-opacity="0.62" stroke-width="2.1"/>
<line x1="1553.75" x2="2790.15" y1="553.60" y2="553.60" stroke="#21262d" stroke-opacity="0.62" stroke-width="2.1"/>
<line x1="1553.75" x2="2790.15" y1="509.10" y2="509.10" stroke="#21262d" stroke-opacity="0.62" stroke-width="2.1"/>
<polyline points="1610.0,636.6 1615.6,630.2 1621.2,630.2 1626.9,634.6 1632.5,629.6 1638.2,626.7 1643.8,634.8 1649.5,626.1 1655.1,630.2 1660.8,624.9 1666.4,629.8 1672.1,633.7 1677.7,633.1 1683.4,626.7 1689.0,626.3 1694.7,630.5 1700.3,625.2 1706.0,634.3 1711.6,629.0 1717.3,633.7 1722.9,632.5 1728.6,630.8 1734.2,634.8 1739.9,634.3 1745.5,629.8 1751.2,636.4 1756.8,632.2 1762.5,640.1 1768.1,634.8 1773.7,632.2 1779.4,647.1 1785.0,641.8 1790.7,637.2 1796.3,640.1 1802.0,638.3 1807.6,642.4 1813.3,640.1 1818.9,640.7 1824.6,635.7 1830.2,638.3 1835.9,638.0 1841.5,640.3 1847.2,640.1 1852.8,639.1 1858.5,635.4 1864.1,637.5 1869.8,634.0 1875.4,627.3 1881.1,630.8 1886.7,634.0 1892.4,627.7 1898.0,632.5 1903.7,637.5 1909.3,633.1 1915.0,635.4 1920.6,629.6 1926.3,627.5 1931.9,621.2 1937.5,625.5 1943.2,627.5 1948.8,623.8 1954.5,634.8 1960.1,626.1 1965.8,624.4 1971.4,633.1 1977.1,624.0 1982.7,627.3 1988.4,630.8 1994.0,627.5 1999.7,622.4 2005.3,630.8 2011.0,631.3 2016.6,634.8 2022.3,637.5 2027.9,631.9 2033.6,639.1 2039.2,636.6 2044.9,639.5 2050.5,636.4 2056.2,637.2 2061.8,635.4 2067.5,641.2 2073.1,640.7 2078.8,643.8 2084.4,641.8 2090.1,638.9 2095.7,637.2 2101.3,643.3 2107.0,636.6 2112.6,634.3 2118.3,636.8 2123.9,631.0 2129.6,639.5 2135.2,640.7 2140.9,641.8 2146.5,629.0 2152.2,631.3 2157.8,633.1 2163.5,631.3 2169.1,635.4 2174.8,621.0 2180.4,629.0 2186.1,628.4 2191.7,625.5 2197.4,625.9 2203.0,626.3 2208.7,629.8 2214.3,624.9 2220.0,620.0 2225.6,622.0 2231.3,621.4 2236.9,629.4 2242.6,631.3 2248.2,628.7 2253.8,628.4 2259.5,625.5 2265.1,636.4 2270.8,625.2 2276.4,631.9 2282.1,634.0 2287.7,637.2 2293.4,640.3 2299.0,632.2 2304.7,635.7 2310.3,641.2 2316.0,642.2 2321.6,639.5 2327.3,632.9 2332.9,639.8 2338.6,645.3 2344.2,641.2 2349.9,641.2 2355.5,650.0 2361.2,640.7 2366.8,641.0 2372.5,637.5 2378.1,632.9 2383.8,635.2 2389.4,639.8 2395.1,642.2 2400.7,627.8 2406.4,636.0 2412.0,635.2 2417.6,634.3 2423.3,632.9 2428.9,633.1 2434.6,633.7 2440.2,633.4 2445.9,630.5 2451.5,631.3 2457.2,631.7 2462.8,628.2 2468.5,628.7 2474.1,622.0 2479.8,636.8 2485.4,623.2 2491.1,622.6 2496.7,634.5 2502.4,628.4 2508.0,628.7 2513.7,632.5 2519.3,631.0 2525.0,632.5 2530.6,622.6 2536.3,626.3 2541.9,626.1 2547.6,629.0 2553.2,636.6 2558.9,635.4 2564.5,632.5 2570.2,639.5 2575.8,633.3 2581.4,637.2 2587.1,638.7 2592.7,635.4 2598.4,636.8 2604.0,640.3 2609.7,635.4 2615.3,643.8 2621.0,637.7 2626.6,638.0 2632.3,641.2 2637.9,638.9 2643.6,644.7 2649.2,636.0 2654.9,639.5 2660.5,640.3 2666.2,634.0 2671.8,639.1 2677.5,641.5 2683.1,641.2 2688.8,632.5 2694.4,638.3 2700.1,626.7 2705.7,639.5 2711.4,624.9 2717.0,629.4 2722.7,629.6 2728.3,630.8 2733.9,627.0" fill="none" stroke="#58a6ff" stroke-width="2.65" stroke-linejoin="round" stroke-linecap="butt"/>
<rect x="1553.75" y="509.10" width="1236.40" height="356.00" fill="none" stroke="#21262d" stroke-width="2.1"/>
<line x1="1544.65" x2="1552.80" y1="865.10" y2="865.10" stroke="#abb3bd" stroke-width="1.9"/>
<text transform="translate(1536.15,871.70) scale(1,1.11)" font-size="17.3" fill="#8b949e" text-anchor="end" font-weight="normal" xml:space="preserve" >0</text>
<line x1="1544.65" x2="1552.80" y1="820.60" y2="820.60" stroke="#abb3bd" stroke-width="1.9"/>
<text transform="translate(1536.15,827.20) scale(1,1.11)" font-size="17.3" fill="#8b949e" text-anchor="end" font-weight="normal" xml:space="preserve" >1</text>
<line x1="1544.65" x2="1552.80" y1="776.10" y2="776.10" stroke="#abb3bd" stroke-width="1.9"/>
<text transform="translate(1536.15,782.70) scale(1,1.11)" font-size="17.3" fill="#8b949e" text-anchor="end" font-weight="normal" xml:space="preserve" >2</text>
<line x1="1544.65" x2="1552.80" y1="731.60" y2="731.60" stroke="#abb3bd" stroke-width="1.9"/>
<text transform="translate(1536.15,738.20) scale(1,1.11)" font-size="17.3" fill="#8b949e" text-anchor="end" font-weight="normal" xml:space="preserve" >3</text>
<line x1="1544.65" x2="1552.80" y1="687.10" y2="687.10" stroke="#abb3bd" stroke-width="1.9"/>
<text transform="translate(1536.15,693.70) scale(1,1.11)" font-size="17.3" fill="#8b949e" text-anchor="end" font-weight="normal" xml:space="preserve" >4</text>
<line x1="1544.65" x2="1552.80" y1="642.60" y2="642.60" stroke="#abb3bd" stroke-width="1.9"/>
<text transform="translate(1536.15,649.20) scale(1,1.11)" font-size="17.3" fill="#8b949e" text-anchor="end" font-weight="normal" xml:space="preserve" >5</text>
<line x1="1544.65" x2="1552.80" y1="598.10" y2="598.10" stroke="#abb3bd" stroke-width="1.9"/>
<text transform="translate(1536.15,604.70) scale(1,1.11)" font-size="17.3" fill="#8b949e" text-anchor="end" font-weight="normal" xml:space="preserve" >6</text>
<line x1="1544.65" x2="1552.80" y1="553.60" y2="553.60" stroke="#abb3bd" stroke-width="1.9"/>
<text transform="translate(1536.15,560.20) scale(1,1.11)" font-size="17.3" fill="#8b949e" text-anchor="end" font-weight="normal" xml:space="preserve" >7</text>
<line x1="1544.65" x2="1552.80" y1="509.10" y2="509.10" stroke="#abb3bd" stroke-width="1.9"/>
<text transform="translate(1536.15,515.70) scale(1,1.11)" font-size="17.3" fill="#8b949e" text-anchor="end" font-weight="normal" xml:space="preserve" >8</text>
<line x1="1609.95" x2="1609.95" y1="866.10" y2="874.10" stroke="#abb3bd" stroke-width="1.9"/>
<line x1="1750.45" x2="1750.45" y1="866.10" y2="874.10" stroke="#abb3bd" stroke-width="1.9"/>
<line x1="1890.95" x2="1890.95" y1="866.10" y2="874.10" stroke="#abb3bd" stroke-width="1.9"/>
<line x1="2031.45" x2="2031.45" y1="866.10" y2="874.10" stroke="#abb3bd" stroke-width="1.9"/>
<line x1="2171.95" x2="2171.95" y1="866.10" y2="874.10" stroke="#abb3bd" stroke-width="1.9"/>
<line x1="2312.45" x2="2312.45" y1="866.10" y2="874.10" stroke="#abb3bd" stroke-width="1.9"/>
<line x1="2452.95" x2="2452.95" y1="866.10" y2="874.10" stroke="#abb3bd" stroke-width="1.9"/>
<line x1="2593.45" x2="2593.45" y1="866.10" y2="874.10" stroke="#abb3bd" stroke-width="1.9"/>
<line x1="2733.95" x2="2733.95" y1="866.10" y2="874.10" stroke="#abb3bd" stroke-width="1.9"/>
<rect x="1553.75" y="893.20" width="1236.40" height="355.90" fill="#161b22"/>
<rect x="1610" y="911" width="214" height="142" fill="#3fb950" fill-opacity="0.25"/>
<rect x="1610" y="1089" width="214" height="142" fill="#58a6ff" fill-opacity="0.25"/>
<rect x="1835" y="911" width="213" height="142" fill="#3fb950" fill-opacity="0.25"/>
<rect x="1835" y="1089" width="213" height="142" fill="#58a6ff" fill-opacity="0.25"/>
<rect x="2060" y="911" width="213" height="142" fill="#3fb950" fill-opacity="0.25"/>
<rect x="2060" y="1089" width="213" height="142" fill="#58a6ff" fill-opacity="0.25"/>
<rect x="2284" y="911" width="214" height="142" fill="#3fb950" fill-opacity="0.25"/>
<rect x="2284" y="1089" width="214" height="142" fill="#58a6ff" fill-opacity="0.25"/>
<rect x="2509" y="911" width="214" height="142" fill="#3fb950" fill-opacity="0.25"/>
<rect x="2509" y="1089" width="214" height="142" fill="#58a6ff" fill-opacity="0.25"/>
<text transform="translate(1579.38,1017.20) scale(1,1.04)" font-size="17.45" fill="#3fb950" text-anchor="start" font-weight="normal" xml:space="preserve" fill-opacity="0.92">GPU compute</text>
<line x1="1715.4" x2="1936.2" y1="1011.4" y2="1011.4" stroke="#3fb950" stroke-width="1.5"/>
<text transform="translate(1579.38,1195.20) scale(1,1.04)" font-size="17.45" fill="#58a6ff" text-anchor="start" font-weight="normal" xml:space="preserve" fill-opacity="0.92">CPU pipeline</text>
<line x1="1725.8" x2="1946.6" y1="1189.4" y2="1189.4" stroke="#58a6ff" stroke-width="1.5"/>
<rect x="1553.75" y="893.20" width="1236.40" height="355.90" fill="none" stroke="#21262d" stroke-width="2.1"/>
<line x1="1609.95" x2="1609.95" y1="1250.10" y2="1258.10" stroke="#abb3bd" stroke-width="1.9"/>
<text transform="translate(1609.95,1286.00) scale(1,1.1)" font-size="24.6" fill="#8b949e" text-anchor="middle" font-weight="normal" xml:space="preserve" >0.0</text>
<line x1="1750.45" x2="1750.45" y1="1250.10" y2="1258.10" stroke="#abb3bd" stroke-width="1.9"/>
<text transform="translate(1750.45,1286.00) scale(1,1.1)" font-size="24.6" fill="#8b949e" text-anchor="middle" font-weight="normal" xml:space="preserve" >2.5</text>
<line x1="1890.95" x2="1890.95" y1="1250.10" y2="1258.10" stroke="#abb3bd" stroke-width="1.9"/>
<text transform="translate(1890.95,1286.00) scale(1,1.1)" font-size="24.6" fill="#8b949e" text-anchor="middle" font-weight="normal" xml:space="preserve" >5.0</text>
<line x1="2031.45" x2="2031.45" y1="1250.10" y2="1258.10" stroke="#abb3bd" stroke-width="1.9"/>
<text transform="translate(2031.45,1286.00) scale(1,1.1)" font-size="24.6" fill="#8b949e" text-anchor="middle" font-weight="normal" xml:space="preserve" >7.5</text>
<line x1="2171.95" x2="2171.95" y1="1250.10" y2="1258.10" stroke="#abb3bd" stroke-width="1.9"/>
<text transform="translate(2171.95,1286.00) scale(1,1.1)" font-size="24.6" fill="#8b949e" text-anchor="middle" font-weight="normal" xml:space="preserve" >10.0</text>
<line x1="2312.45" x2="2312.45" y1="1250.10" y2="1258.10" stroke="#abb3bd" stroke-width="1.9"/>
<text transform="translate(2312.45,1286.00) scale(1,1.1)" font-size="24.6" fill="#8b949e" text-anchor="middle" font-weight="normal" xml:space="preserve" >12.5</text>
<line x1="2452.95" x2="2452.95" y1="1250.10" y2="1258.10" stroke="#abb3bd" stroke-width="1.9"/>
<text transform="translate(2452.95,1286.00) scale(1,1.1)" font-size="24.6" fill="#8b949e" text-anchor="middle" font-weight="normal" xml:space="preserve" >15.0</text>
<line x1="2593.45" x2="2593.45" y1="1250.10" y2="1258.10" stroke="#abb3bd" stroke-width="1.9"/>
<text transform="translate(2593.45,1286.00) scale(1,1.1)" font-size="24.6" fill="#8b949e" text-anchor="middle" font-weight="normal" xml:space="preserve" >17.5</text>
<line x1="2733.95" x2="2733.95" y1="1250.10" y2="1258.10" stroke="#abb3bd" stroke-width="1.9"/>
<text transform="translate(2733.95,1286.00) scale(1,1.1)" font-size="24.6" fill="#8b949e" text-anchor="middle" font-weight="normal" xml:space="preserve" >20.0</text>
<text transform="translate(2171.95,1316.30) scale(1,1.06)" font-size="20.0" fill="#8b949e" text-anchor="middle" font-weight="normal" xml:space="preserve" >Time (s)</text>
<text transform="translate(40.00,298.20) scale(1,1.08)" font-size="19.0" fill="#8b949e" text-anchor="middle" font-weight="normal" xml:space="preserve" >GPU</text>
<text transform="translate(40.00,320.20) scale(1,1.08)" font-size="19.0" fill="#8b949e" text-anchor="middle" font-weight="normal" xml:space="preserve" >Util</text>
<text transform="translate(61.50,682.30) scale(1,1.08)" font-size="19.0" fill="#8b949e" text-anchor="middle" font-weight="normal" xml:space="preserve" >VRAM</text>
<text transform="translate(61.50,704.30) scale(1,1.08)" font-size="19.0" fill="#8b949e" text-anchor="middle" font-weight="normal" xml:space="preserve" >Used</text>
<text transform="translate(89.50,1077.00) scale(1,1.08)" font-size="19.0" fill="#8b949e" text-anchor="middle" font-weight="normal" xml:space="preserve" >Pipeline</text>
<text transform="translate(1490.00,303.60) rotate(-90) scale(1,1.03)" font-size="19.9" fill="#8b949e" text-anchor="middle" font-weight="normal" xml:space="preserve" >util %</text>
<text transform="translate(1510.60,687.00) rotate(-90) scale(1,1.1)" font-size="19.5" fill="#8b949e" text-anchor="middle" font-weight="normal" xml:space="preserve" >VRAM (GB)</text>
<text transform="translate(169.75,77.00) scale(1,1.12)" font-size="25.0" fill="#f85149" text-anchor="start" font-weight="bold" xml:space="preserve" >   BOTTLENECKED</text>
<text transform="translate(169.75,106.10) scale(1,1.06)" font-size="25.0" fill="#f85149" text-anchor="start" font-weight="bold" xml:space="preserve" >avg GPU util: 39%  ·  CPU blocking pipeline</text>
<text transform="translate(1553.75,77.00) scale(1,1.12)" font-size="25.0" fill="#3fb950" text-anchor="start" font-weight="bold" xml:space="preserve" >   OPTIMIZED</text>
<text transform="translate(1553.75,106.10) scale(1,1.06)" font-size="25.0" fill="#3fb950" text-anchor="start" font-weight="bold" xml:space="preserve" >avg GPU util: 87%  ·  batched tokenization</text>
<path d="M177.3 65 L184.2 76.6 L170.4 76.6 Z" fill="none" stroke="#f85149" stroke-opacity="0.85" stroke-width="1.1" stroke-linejoin="miter"/>
<path d="M177.3 68.8 L177.3 73.2 M177.3 74.4 L177.3 75.6" stroke="#f85149" stroke-width="1.1" fill="none"/>
<path d="M1555.6 71.2 L1558.3 75.0" fill="none" stroke="#3fb950" stroke-width="2.6" stroke-linecap="butt"/>
<path d="M1557.9 75.4 L1565.8 63.8" fill="none" stroke="#3fb950" stroke-width="1.7" stroke-linecap="round"/>
<text transform="translate(1436.20,43.30) scale(1,1.12)" font-size="32.66" fill="#e6edf3" text-anchor="middle" font-weight="bold" xml:space="preserve" >GPU Utilization Profile  ·  Local AI Inference</text>
<text transform="translate(1437.50,71.70) scale(1,1.02)" font-size="20.0" fill="#8b949e" text-anchor="middle" font-weight="normal" xml:space="preserve" >nvidia-smi dmon  ·  sampled every 500 ms  ·  20 s window</text>
</svg>
</body></html>
